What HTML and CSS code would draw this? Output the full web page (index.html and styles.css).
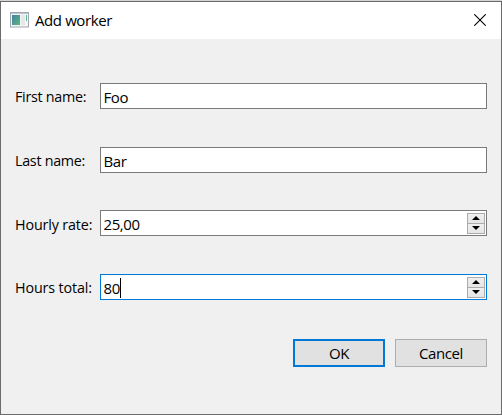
FILE: index.html
```html
<!DOCTYPE html>
<html lang="en">
<head>
<meta charset="utf-8">
<title>Add worker</title>
<link rel="stylesheet" href="styles.css">
</head>
<body>
<main class="dialog">
  <header class="titlebar">
    <svg class="app-icon" width="19" height="16" viewBox="0 0 19 16">
      <defs><linearGradient id="pane" x1="0" y1="0" x2="1" y2="1"><stop offset="0" stop-color="#477fa3"/><stop offset="1" stop-color="#59b77e"/></linearGradient></defs>
      <rect x=".5" y=".5" width="18" height="14.5" fill="#f3f5f5" stroke="#a2a8b3"/>
      <path d="M1 1.5h17" stroke="#bdc5cf"/>
      <rect x="2" y="3" width="8" height="10" fill="url(#pane)"/>
      <rect x="11" y="3" width="4" height="10" fill="#e5e9e8"/>
      <path d="M16.5 3v6" stroke="#62b59a"/>
    </svg>
    <h1 class="title"><span class="text">Add worker</span></h1>
    <svg class="close" width="12" height="12" viewBox="0 0 12 12"><path d="M.3 .3l11.4 11.4M11.7 .3L.3 11.7" stroke="#000" stroke-width="1.1"/></svg>
  </header>
  <form class="form">
    <div class="row"><span class="label label-name text">First name:</span><div class="field"><span class="text">Foo</span></div></div>
    <div class="row"><span class="label label-name text">Last name:</span><div class="field"><span class="text">Bar</span></div></div>
    <div class="row row-rate"><span class="label label-rate text">Hourly rate:</span><div class="field"><span class="text">25,00</span>
      <div class="spin"><i class="step"><svg width="8" height="4"><path d="M4 0L8 4H0z"/></svg></i><i class="step"><svg width="8" height="4"><path d="M0 0H8L4 4z"/></svg></i></div></div></div>
    <div class="row"><span class="label text">Hours total:</span><div class="field focused"><span class="text">80</span><i class="caret"></i>
      <div class="spin"><i class="step"><svg width="8" height="4"><path d="M4 0L8 4H0z"/></svg></i><i class="step"><svg width="8" height="4"><path d="M0 0H8L4 4z"/></svg></i></div></div></div>
    <div class="actions"><div class="button primary"><span class="text">OK</span></div><div class="button"><span class="text">Cancel</span></div></div>
  </form>
</main>
</body>
</html>
```
FILE: styles.css
```css
* { box-sizing: border-box; }
body {
  margin: 0;
  background: #d4d4d2;
  font: 15px/20px "Open Sans", "Noto Sans", sans-serif;
  color: #000;
}
.dialog {
  margin-top: 1px;
  height: 414px;
  border: 1px solid #6b6b6b;
  background: #f0f0f0;
}
.titlebar {
  display: flex;
  align-items: center;
  height: 37px;
  padding: 0 15px 0 9px;
  background: #fff;
}
.app-icon, .close { margin-top: -1px; }
.title { margin: -2px auto 0 6px; font: inherit; }
.text {
  display: inline-block;
  white-space: nowrap;
  letter-spacing: -0.4px;
}
.form {
  display: flex;
  flex-direction: column;
  gap: 38px;
  padding: 44px 14px 0;
}
.row { display: flex; height: 26px; align-items: center; }
.row-rate { margin: -1px 0 0; }
.label {
  width: 85px;
  letter-spacing: -0.15px;
  transform: scaleX(.955);
  transform-origin: left;
}
.label-name { letter-spacing: -0.3px; }
.label-rate { padding-top: 1px; }
.field {
  display: flex;
  flex: 1;
  align-items: center;
  height: 26px;
  padding: 2px 1px 0 3px;
  border: 1px solid #7a7a7a;
  background: #fff;
}
.field .text { margin-left: -0.5px; }
.focused { border-color: #0078d7; }
.caret { width: 1px; height: 20px; background: #000; }
.spin {
  display: flex;
  flex-direction: column;
  width: 18px;
  height: 21px;
  margin: -2px 0 0 auto;
  border: 1px solid #acacac;
}
.step {
  display: flex;
  flex: 1;
  align-items: center;
  justify-content: center;
  background: linear-gradient(#f0f0f0, #e5e5e5);
}
.step + .step { border-top: 1px solid #acacac; }
.actions { display: flex; gap: 10px; justify-content: flex-end; margin-top: 1px; }
.button {
  display: flex;
  align-items: center;
  justify-content: center;
  width: 92px;
  height: 28px;
  border: 1px solid #adadad;
  background: #e1e1e1;
}
.primary { border: 2px solid #0078d7; }
```
